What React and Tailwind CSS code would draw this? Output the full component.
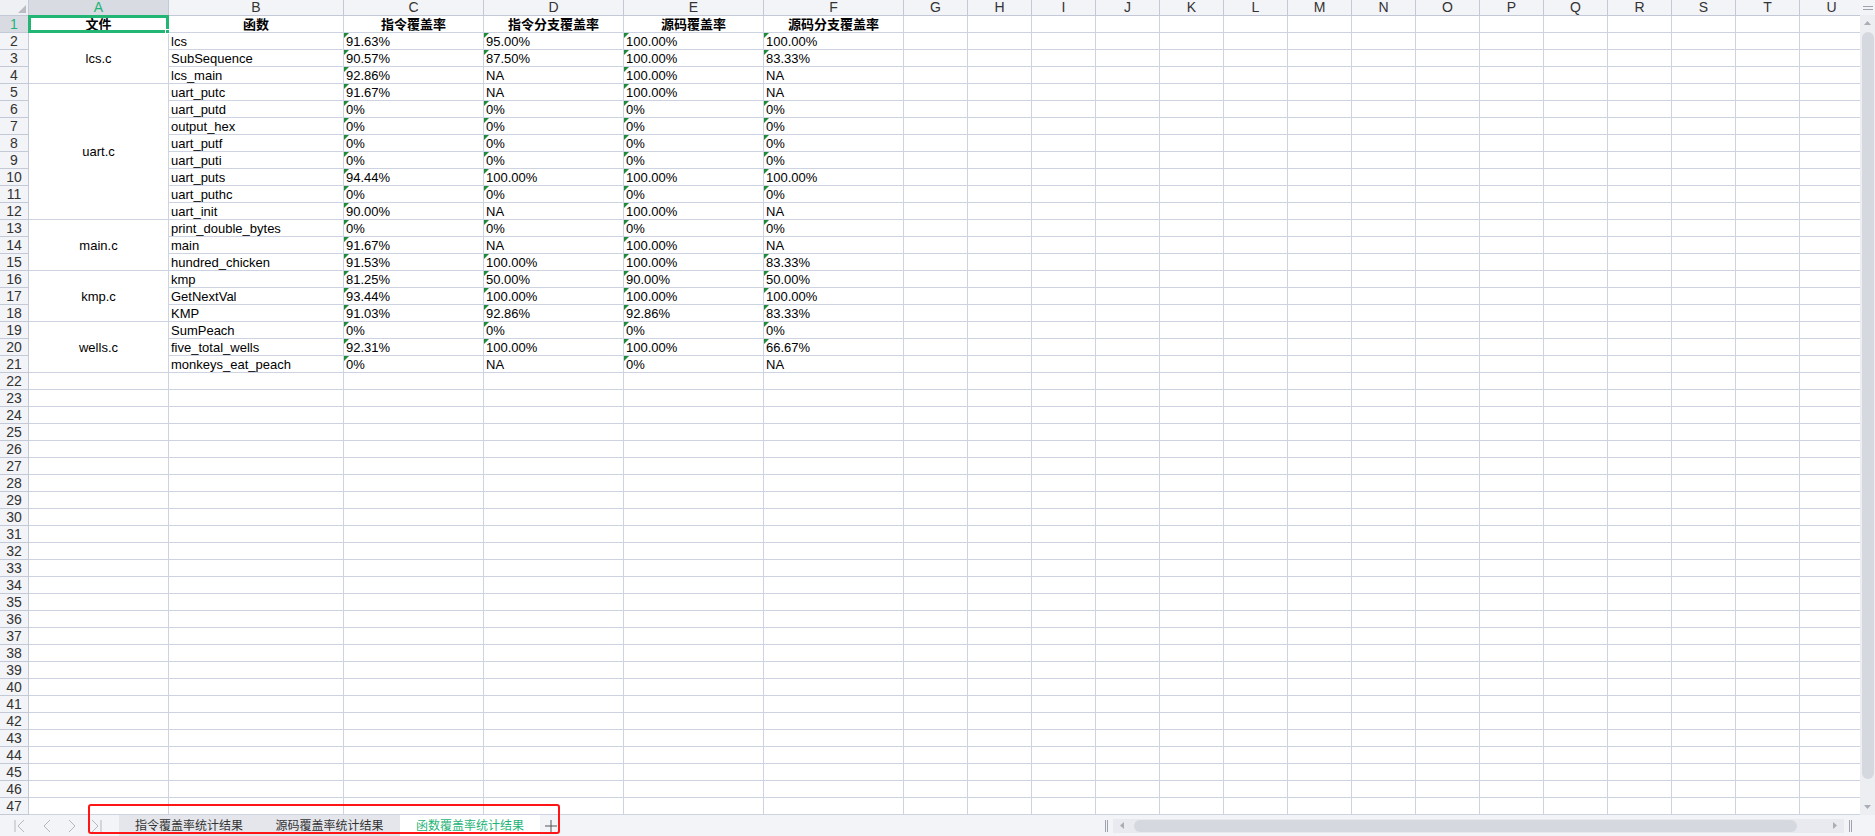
import React from "react";

const cols = ["A", "B", "C", "D", "E", "F", "G", "H", "I", "J", "K", "L", "M", "N", "O", "P", "Q", "R", "S", "T", "U"];

const data = [
    ["lcs", "91.63%", "95.00%", "100.00%", "100.00%"],
    ["SubSequence", "90.57%", "87.50%", "100.00%", "83.33%"],
    ["lcs_main", "92.86%", "NA", "100.00%", "NA"],
    ["uart_putc", "91.67%", "NA", "100.00%", "NA"],
    ["uart_putd", "0%", "0%", "0%", "0%"],
    ["output_hex", "0%", "0%", "0%", "0%"],
    ["uart_putf", "0%", "0%", "0%", "0%"],
    ["uart_puti", "0%", "0%", "0%", "0%"],
    ["uart_puts", "94.44%", "100.00%", "100.00%", "100.00%"],
    ["uart_puthc", "0%", "0%", "0%", "0%"],
    ["uart_init", "90.00%", "NA", "100.00%", "NA"],
    ["print_double_bytes", "0%", "0%", "0%", "0%"],
    ["main", "91.67%", "NA", "100.00%", "NA"],
    ["hundred_chicken", "91.53%", "100.00%", "100.00%", "83.33%"],
    ["kmp", "81.25%", "50.00%", "90.00%", "50.00%"],
    ["GetNextVal", "93.44%", "100.00%", "100.00%", "100.00%"],
    ["KMP", "91.03%", "92.86%", "92.86%", "83.33%"],
    ["SumPeach", "0%", "0%", "0%", "0%"],
    ["five_total_wells", "92.31%", "100.00%", "100.00%", "66.67%"],
    ["monkeys_eat_peach", "0%", "NA", "0%", "NA"],
];

// merged file cells in column A
const files = {
    2: { name: "lcs.c", span: "row-span-3" },
    5: { name: "uart.c", span: "row-span-8" },
    13: { name: "main.c", span: "row-span-3" },
    16: { name: "kmp.c", span: "row-span-3" },
    19: { name: "wells.c", span: "row-span-3" },
};

const headers = ["文件", "函数", "指令覆盖率", "指令分支覆盖率", "源码覆盖率", "源码分支覆盖率"];

const line = "border-r border-b border-[#cdd3e0]";

function Corner() {
    return (
        <div className="bg-[#eef0f4] border-r border-b border-[#c3c9d6] relative">
            <svg className="absolute right-[2px] bottom-[2px]" width="8" height="8" viewBox="0 0 8 8">
                <polygon points="8,0 8,8 0,8" fill="#b9bcc4" />
            </svg>
        </div>
    );
}

function ValueCell({ v }) {
    return (
        <div className={`${line} relative px-[2px] text-[13px] leading-[18px] whitespace-nowrap overflow-hidden`}>
            {v !== "NA" && (
                <svg className="absolute left-0 top-0" width="5" height="5" viewBox="0 0 5 5">
                    <polygon points="0,0 5,0 0,5" fill="#1e8a3a" />
                </svg>
            )}
            {v}
        </div>
    );
}

function Grid() {
    const cells = [];
    cells.push(<Corner key="corner" />);
    cols.forEach((c) => {
        const sel = c === "A";
        cells.push(
            <div
                key={"h" + c}
                className={`${sel ? "bg-[#d8dbe1] text-[#1fb478]" : "bg-[#f3f4f7] text-[#333]"} border-r border-b border-[#c3c9d6] text-[14px] leading-[15px] text-center`}
            >
                {c}
            </div>
        );
    });

    for (let r = 1; r <= 47; r++) {
        const selRow = r === 1;
        cells.push(
            <div
                key={"r" + r}
                className={`${selRow ? "bg-[#d8dbe1] text-[#1fb478]" : "bg-[#f3f4f7] text-[#333]"} border-r border-b border-[#c3c9d6] text-[14px] leading-[17px] text-center`}
            >
                {r}
            </div>
        );
        if (r === 1) {
            headers.forEach((h, i) => {
                cells.push(
                    <div key={"t" + i} className={`${line} relative text-[13px] leading-[17px] font-bold text-center`}>
                        {h}
                        {i === 0 && (
                            <div className="absolute -left-px -top-px -right-px -bottom-px border-[3px] border-[#22b573]">
                                <div className="absolute -right-[4px] -bottom-[4px] w-[5px] h-[5px] bg-[#22b573] border border-white" />
                            </div>
                        )}
                    </div>
                );
            });
        } else if (r <= 21) {
            if (files[r]) {
                cells.push(
                    <div
                        key={"a" + r}
                        className={`${line} ${files[r].span} flex items-center justify-center text-[13px] pt-px`}
                    >
                        {files[r].name}
                    </div>
                );
            }
            const row = data[r - 2];
            cells.push(
                <div key={"b" + r} className={`${line} px-[2px] text-[13px] leading-[18px] whitespace-nowrap overflow-hidden`}>
                    {row[0]}
                </div>
            );
            row.slice(1).forEach((v, i) => cells.push(<ValueCell key={"v" + r + i} v={v} />));
        } else {
            for (let i = 0; i < 6; i++) cells.push(<div key={"e" + r + i} className={line} />);
        }
        for (let i = 0; i < 15; i++) cells.push(<div key={"g" + r + i} className={line} />);
    }

    return (
        <div className="flex-1 overflow-hidden bg-white">
            <div className="grid grid-cols-[29px_140px_175px_140px_140px_140px_140px_repeat(15,64px)] grid-rows-[16px_repeat(47,17px)] text-black">
                {cells}
            </div>
        </div>
    );
}

function VScroll() {
    return (
        <div className="w-[15px] flex flex-col bg-[#f3f4f7]">
            <div className="h-[15px] flex flex-col items-center justify-center gap-[2px]">
                <div className="w-[10px] h-px bg-[#9ea3ad]" />
                <div className="w-[10px] h-px bg-[#9ea3ad]" />
            </div>
            <div className="flex-1 bg-[#eceef2] flex flex-col items-center pt-[6px] pb-[6px]">
                <svg width="7" height="4" viewBox="0 0 7 4">
                    <polygon points="3.5,0 7,4 0,4" fill="#a9adb6" />
                </svg>
                <div className="w-[12px] flex-1 mt-[7px] mb-[26px] bg-[#d6d8df] rounded-full" />
                <svg width="7" height="4" viewBox="0 0 7 4">
                    <polygon points="0,0 7,0 3.5,4" fill="#a9adb6" />
                </svg>
            </div>
        </div>
    );
}

function Nav() {
    return (
        <div className="w-[119px] flex items-center text-[#b3b7bf]">
            <svg className="ml-[14px]" width="11" height="14" viewBox="0 0 11 14">
                <path d="M1 1 V13 M10 1 L4 7 L10 13" stroke="currentColor" strokeWidth="1" fill="none" />
            </svg>
            <svg className="ml-[18px]" width="8" height="14" viewBox="0 0 8 14">
                <path d="M7 1 L1 7 L7 13" stroke="currentColor" strokeWidth="1" fill="none" />
            </svg>
            <svg className="ml-[17px]" width="8" height="14" viewBox="0 0 8 14">
                <path d="M1 1 L7 7 L1 13" stroke="currentColor" strokeWidth="1" fill="none" />
            </svg>
            <svg className="ml-[15px]" width="11" height="14" viewBox="0 0 11 14">
                <path d="M1 1 L7 7 L1 13 M10 1 V13" stroke="currentColor" strokeWidth="1" fill="none" />
            </svg>
        </div>
    );
}

function HScroll() {
    return (
        <div className="flex items-center ml-auto mr-[23px]">
            <div className="w-[3px] h-[12px] border-l border-r border-[#9ea3ad] mr-[5px]" />
            <div className="w-[731px] h-[14px] bg-[#e9eaef] flex items-center pl-[7px] pr-[7px]">
                <svg width="4" height="7" viewBox="0 0 4 7">
                    <polygon points="4,0 4,7 0,3.5" fill="#a9adb6" />
                </svg>
                <div className="w-[663px] h-[12px] ml-[10px] bg-[#d6d8df] rounded-full" />
                <svg className="ml-auto" width="4" height="7" viewBox="0 0 4 7">
                    <polygon points="0,0 4,3.5 0,7" fill="#a9adb6" />
                </svg>
            </div>
            <div className="w-[3px] h-[12px] border-l border-r border-[#9ea3ad] ml-[5px]" />
        </div>
    );
}

export default function App() {
    return (
        <div className="w-[1875px] h-[836px] flex flex-col overflow-hidden relative font-['Liberation_Sans','Noto_Sans_CJK_SC',sans-serif] bg-[#f3f4f7]">
            <div className="h-[815px] flex">
                <Grid />
                <VScroll />
            </div>
            <div className="flex-1 flex bg-[#f3f4f7] text-[12px]">
                <Nav />
                <div className="flex bg-[#e4e6eb]">
                    <div className="w-[140px] flex items-center justify-center text-[#333]">指令覆盖率统计结果</div>
                    <div className="w-[141px] flex items-center justify-center text-[#333]">源码覆盖率统计结果</div>
                </div>
                <div className="w-[140px] bg-white flex items-center justify-center text-[#1fb478]">函数覆盖率统计结果</div>
                <div className="w-[22px] flex items-center justify-center">
                    <svg width="12" height="12" viewBox="0 0 12 12">
                        <path d="M6 0 V12 M0 6 H12" stroke="#555" strokeWidth="1" />
                    </svg>
                </div>
                <HScroll />
            </div>
            {/* red annotation box */}
            <div className="absolute left-[88px] top-[804px] w-[472px] h-[30px] border-2 border-[#ff1515] rounded-[3px] pointer-events-none" />
        </div>
    );
}
